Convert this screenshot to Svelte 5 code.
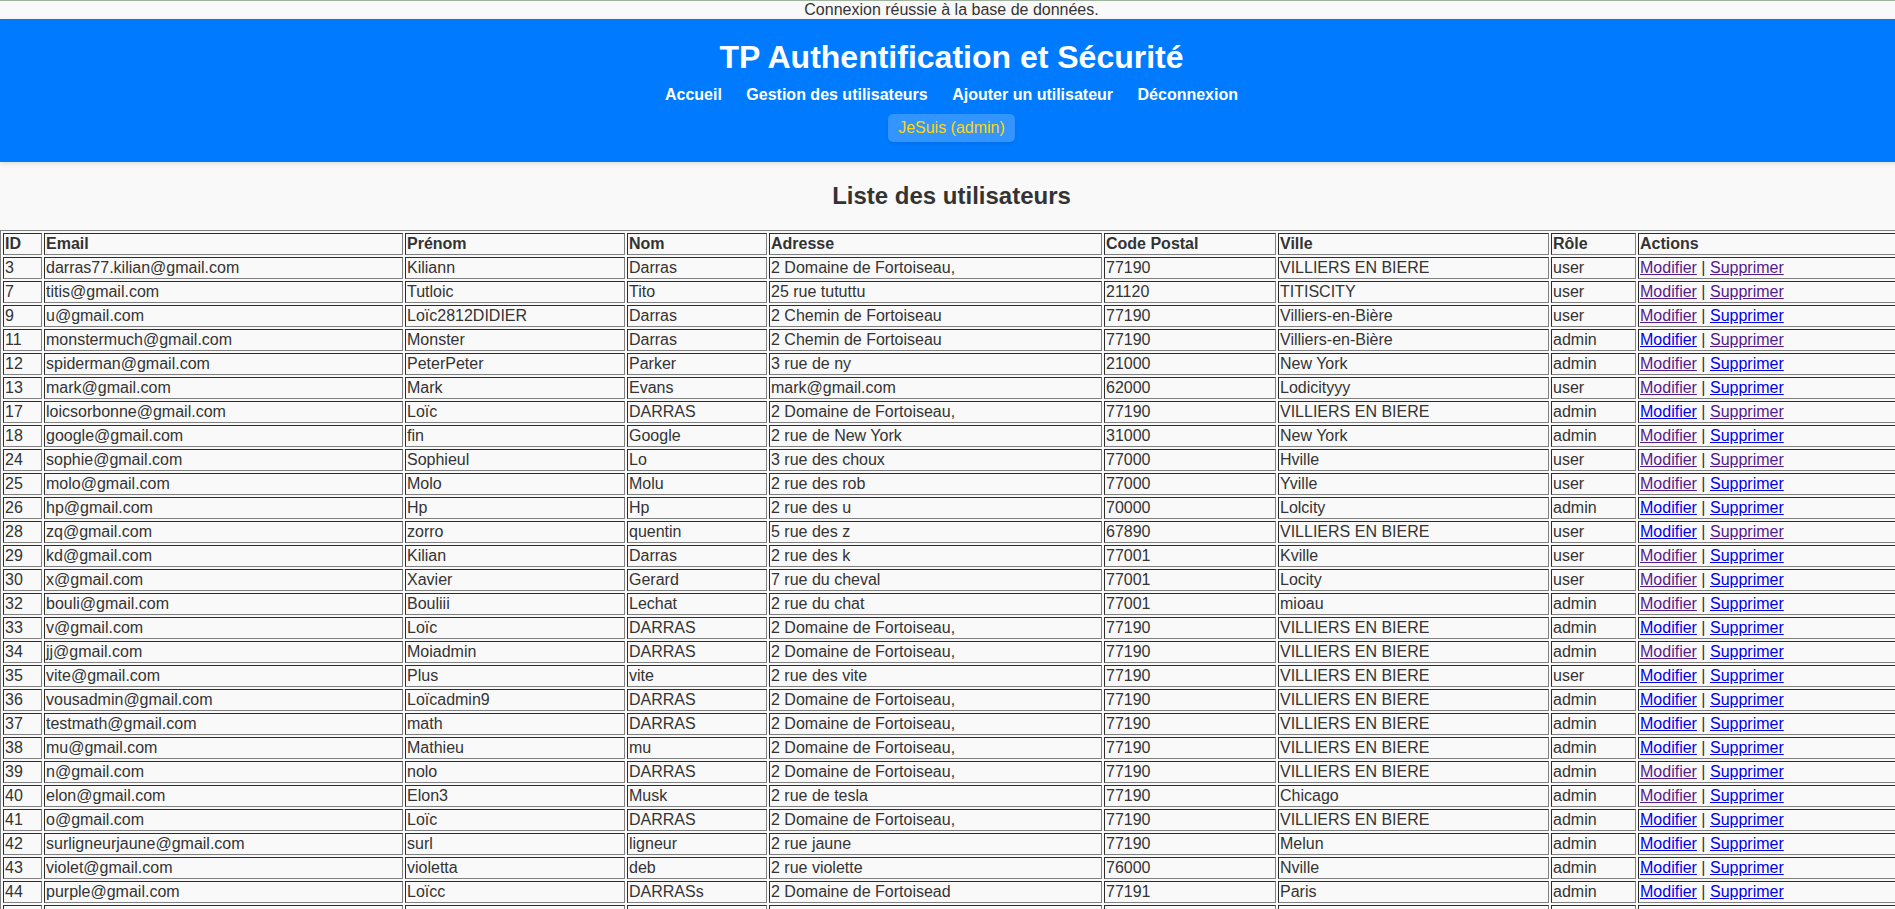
<script>
  const columns = [
    { label: 'ID', width: 39 },
    { label: 'Email', width: 359 },
    { label: 'Prénom', width: 220 },
    { label: 'Nom', width: 140 },
    { label: 'Adresse', width: 333 },
    { label: 'Code Postal', width: 172 },
    { label: 'Ville', width: 271 },
    { label: 'Rôle', width: 85 },
    { label: 'Actions', width: 262 }
  ];

  // id, email, prénom, nom, adresse, code postal, ville, rôle, visited links (m = modifier, s = supprimer)
  const users = [
    [3, 'darras77.kilian@gmail.com', 'Kiliann', 'Darras', '2 Domaine de Fortoiseau,', '77190', 'VILLIERS EN BIERE', 'user', 'ms'],
    [7, 'titis@gmail.com', 'Tutloic', 'Tito', '25 rue tututtu', '21120', 'TITISCITY', 'user', 'ms'],
    [9, 'u@gmail.com', 'Loïc2812DIDIER', 'Darras', '2 Chemin de Fortoiseau', '77190', 'Villiers-en-Bière', 'user', 'm'],
    [11, 'monstermuch@gmail.com', 'Monster', 'Darras', '2 Chemin de Fortoiseau', '77190', 'Villiers-en-Bière', 'admin', 's'],
    [12, 'spiderman@gmail.com', 'PeterPeter', 'Parker', '3 rue de ny', '21000', 'New York', 'admin', 'm'],
    [13, 'mark@gmail.com', 'Mark', 'Evans', 'mark@gmail.com', '62000', 'Lodicityyy', 'user', 'm'],
    [17, 'loicsorbonne@gmail.com', 'Loïc', 'DARRAS', '2 Domaine de Fortoiseau,', '77190', 'VILLIERS EN BIERE', 'admin', 's'],
    [18, 'google@gmail.com', 'fin', 'Google', '2 rue de New York', '31000', 'New York', 'admin', 'm'],
    [24, 'sophie@gmail.com', 'Sophieul', 'Lo', '3 rue des choux', '77000', 'Hville', 'user', 'ms'],
    [25, 'molo@gmail.com', 'Molo', 'Molu', '2 rue des rob', '77000', 'Yville', 'user', 'm'],
    [26, 'hp@gmail.com', 'Hp', 'Hp', '2 rue des u', '70000', 'Lolcity', 'admin', ''],
    [28, 'zq@gmail.com', 'zorro', 'quentin', '5 rue des z', '67890', 'VILLIERS EN BIERE', 'user', 's'],
    [29, 'kd@gmail.com', 'Kilian', 'Darras', '2 rue des k', '77001', 'Kville', 'user', 'm'],
    [30, 'x@gmail.com', 'Xavier', 'Gerard', '7 rue du cheval', '77001', 'Locity', 'user', 'm'],
    [32, 'bouli@gmail.com', 'Bouliii', 'Lechat', '2 rue du chat', '77001', 'mioau', 'admin', 'm'],
    [33, 'v@gmail.com', 'Loïc', 'DARRAS', '2 Domaine de Fortoiseau,', '77190', 'VILLIERS EN BIERE', 'admin', ''],
    [34, 'jj@gmail.com', 'Moiadmin', 'DARRAS', '2 Domaine de Fortoiseau,', '77190', 'VILLIERS EN BIERE', 'admin', 'm'],
    [35, 'vite@gmail.com', 'Plus', 'vite', '2 rue des vite', '77190', 'VILLIERS EN BIERE', 'user', ''],
    [36, 'vousadmin@gmail.com', 'Loïcadmin9', 'DARRAS', '2 Domaine de Fortoiseau,', '77190', 'VILLIERS EN BIERE', 'admin', ''],
    [37, 'testmath@gmail.com', 'math', 'DARRAS', '2 Domaine de Fortoiseau,', '77190', 'VILLIERS EN BIERE', 'admin', ''],
    [38, 'mu@gmail.com', 'Mathieu', 'mu', '2 Domaine de Fortoiseau,', '77190', 'VILLIERS EN BIERE', 'admin', ''],
    [39, 'n@gmail.com', 'nolo', 'DARRAS', '2 Domaine de Fortoiseau,', '77190', 'VILLIERS EN BIERE', 'admin', 'm'],
    [40, 'elon@gmail.com', 'Elon3', 'Musk', '2 rue de tesla', '77190', 'Chicago', 'admin', 'm'],
    [41, 'o@gmail.com', 'Loïc', 'DARRAS', '2 Domaine de Fortoiseau,', '77190', 'VILLIERS EN BIERE', 'admin', ''],
    [42, 'surligneurjaune@gmail.com', 'surl', 'ligneur', '2 rue jaune', '77190', 'Melun', 'admin', ''],
    [43, 'violet@gmail.com', 'violetta', 'deb', '2 rue violette', '76000', 'Nville', 'admin', ''],
    [44, 'purple@gmail.com', 'Loïcc', 'DARRASs', '2 Domaine de Fortoisead', '77191', 'Paris', 'admin', '']
  ];
</script>

<div class="page">
  <div class="status">Connexion réussie à la base de données.</div>

  <header>
    <h1>TP Authentification et Sécurité</h1>
    <nav>
      <a href="#accueil">Accueil</a>
      <a href="#utilisateurs">Gestion des utilisateurs</a>
      <a href="#ajouter">Ajouter un utilisateur</a>
      <a href="#deconnexion">Déconnexion</a>
    </nav>
    <div class="account">JeSuis (admin)</div>
  </header>

  <main>
    <h2>Liste des utilisateurs</h2>
    <table>
      <colgroup>
        {#each columns as column}
          <col style="width: {column.width}px" />
        {/each}
      </colgroup>
      <thead>
        <tr>
          {#each columns as column}
            <th scope="col">{column.label}</th>
          {/each}
        </tr>
      </thead>
      <tbody>
        {#each users as user}
          <tr>
            {#each user.slice(0, 8) as value}
              <td>{value}</td>
            {/each}
            <td>
              <a class:seen={user[8].includes('m')} href="#modifier-{user[0]}">Modifier</a> |
              <a class:seen={user[8].includes('s')} href="#supprimer-{user[0]}">Supprimer</a>
            </td>
          </tr>
        {/each}
        <tr>
          {#each columns as column}
            <td></td>
          {/each}
        </tr>
      </tbody>
    </table>
  </main>
</div>

<style>
  :global(body) {
    margin: 0;
    overflow-x: hidden;
    background: #f9f9f9;
    color: #333;
    font-family: Arial, 'Liberation Sans', sans-serif;
    font-size: 16px;
  }

  .page {
    width: calc(100% + 8px);
    border-top: 1px solid #9db39d;
  }

  .status {
    line-height: 18px;
    text-align: center;
  }

  header {
    display: flex;
    flex-direction: column;
    align-items: center;
    gap: 10px;
    padding: 20px;
    background: #007bff;
    color: #fff;
    box-shadow: 0 2px 5px rgba(0, 0, 0, 0.1);
  }

  h1 {
    margin: 0;
    font-size: 32px;
    line-height: 37px;
  }

  nav {
    line-height: 18px;
  }

  nav a {
    margin: 0 10px;
    color: #fff;
    font-weight: bold;
    text-decoration: none;
  }

  .account {
    padding: 5px 10px;
    border-radius: 5px;
    background: rgba(255, 255, 255, 0.2);
    box-shadow: 0 2px 4px rgba(0, 0, 0, 0.1);
    color: #ffd700;
    line-height: 18px;
  }

  h2 {
    margin: 20px 0;
    font-size: 24px;
    line-height: 28px;
    text-align: center;
  }

  table {
    width: 100%;
    table-layout: fixed;
    border: 1px outset gray;
    border-spacing: 2px;
  }

  th,
  td {
    height: 18px;
    padding: 1px;
    border: 1px inset gray;
    line-height: 18px;
    text-align: left;
  }

  td a {
    color: #0000ee;
  }

  td a.seen {
    color: #551a8b;
  }
</style>
